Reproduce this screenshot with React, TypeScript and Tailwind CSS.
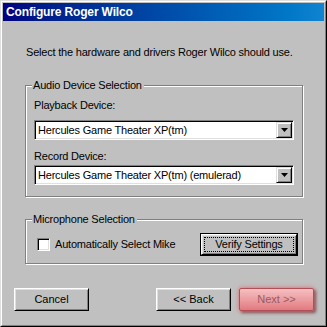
import React from "react";

const font = { fontFamily: '"Liberation Sans", Arial, sans-serif' };

function Combo({ text }: { text: string }) {
  return (
    <div className="flex h-[20px] w-[260px] border border-t-[#808080] border-l-[#808080] border-b-white border-r-white bg-white">
      <div className="flex flex-1 items-stretch shadow-[inset_1px_1px_#000,inset_-1px_-1px_#dfdfdf] p-[1px]">
        <div className="flex flex-1 items-center pl-[2px] text-[11px] leading-[13px] tracking-[-0.2px] text-black">{text}</div>
        <div className="flex w-[16px] items-center justify-center bg-[#c0c0c0] border border-t-[#dfdfdf] border-l-[#dfdfdf] border-b-black border-r-black shadow-[inset_1px_1px_#fff,inset_-1px_-1px_#808080]">
          <svg width="7" height="4" viewBox="0 0 7 4">
            <path d="M0 0h7L3.5 4z" fill="#000" />
          </svg>
        </div>
      </div>
    </div>
  );
}

function Btn({ label, className = "" }: { label: string; className?: string }) {
  return (
    <div
      className={`flex h-[23px] w-[75px] items-center justify-center border border-t-white border-l-white border-b-black border-r-black bg-[#c0c0c0] shadow-[inset_1px_1px_#dfdfdf,inset_-1px_-1px_#808080] text-[11px] leading-[13px] text-black ${className}`}
    >
      {label}
    </div>
  );
}

export default function App() {
  return (
    <div style={font} className="h-[327px] w-[327px] bg-[#c0c0c0] border border-t-[#dfdfdf] border-l-[#dfdfdf] border-b-black border-r-black">
      <div className="flex h-full w-full flex-col border border-t-white border-l-white border-b-[#808080] border-r-[#808080] p-[1px]">
        <div className="flex h-[18px] items-center bg-gradient-to-r from-[#000080] to-[#1084d0] pl-[3px] text-[12px] font-bold leading-[14px] tracking-[-0.15px] text-white">
          Configure Roger Wilco
        </div>

        <div className="ml-[23px] mt-[25px] text-[11px] leading-[13px] tracking-[-0.2px] text-black">
          Select the hardware and drivers Roger Wilco should use.
        </div>

        {/* Audio group */}
        <div className="ml-[22px] mt-[26px] flex w-[278px] flex-col border border-[#808080] shadow-[1px_1px_#fff,inset_1px_1px_#fff] pb-[11px] pl-[8px]">
          <div className="-mt-[7px] -ml-[2px] w-fit bg-[#c0c0c0] pl-[1px] pr-[2px] text-[11px] leading-[13px] tracking-[-0.2px] text-black">
            Audio Device Selection
          </div>
          <div className="mt-[7px] text-[11px] leading-[13px] tracking-[-0.2px] text-black">Playback Device:</div>
          <div className="mt-[8px]">
            <Combo text="Hercules Game Theater XP(tm)" />
          </div>
          <div className="mt-[10px] text-[11px] leading-[13px] tracking-[-0.2px] text-black">Record Device:</div>
          <div className="mt-[2px]">
            <Combo text="Hercules Game Theater XP(tm) (emulerad)" />
          </div>
        </div>

        {/* Microphone group */}
        <div className="ml-[22px] mt-[22px] flex w-[278px] flex-col border border-[#808080] shadow-[1px_1px_#fff,inset_1px_1px_#fff] pb-[7px] pl-[11px] pr-[4px]">
          <div className="-mt-[7px] -ml-[5px] w-fit bg-[#c0c0c0] pl-[1px] pr-[2px] text-[11px] leading-[13px] tracking-[-0.2px] text-black">
            Microphone Selection
          </div>
          <div className="mt-[7px] flex items-center justify-between">
            <div className="flex items-center">
              <div className="h-[13px] w-[13px] border border-t-[#808080] border-l-[#808080] border-b-white border-r-white bg-white shadow-[inset_1px_1px_#000,inset_-1px_-1px_#dfdfdf]" />
              <div className="ml-[5px] text-[11px] leading-[13px] tracking-[-0.2px] text-black">Automatically Select Mike</div>
            </div>
            <div className="border border-black">
              <div className="flex h-[21px] w-[96px] items-center justify-center border border-t-white border-l-white border-b-black border-r-black bg-[#c0c0c0] shadow-[inset_1px_1px_#dfdfdf,inset_-1px_-1px_#808080] p-[2px]">
                <div className="flex h-full w-full items-center justify-center border border-dotted border-black text-[11px] leading-[13px] tracking-[-0.2px] text-black">
                  Verify Settings
                </div>
              </div>
            </div>
          </div>
        </div>

        {/* Bottom buttons */}
        <div className="ml-[11px] mt-[24px] flex items-center">
          <Btn label="Cancel" />
          <Btn label="<< Back" className="ml-[67px]" />
          <div className="ml-[8px] flex h-[23px] w-[75px] items-center justify-center rounded-[2px] border border-[#b04f55] bg-gradient-to-b from-[#f4c0c2] to-[#e27a80] text-[11px] leading-[13px] text-[#9a5a62] shadow-[0_0_5px_#e06a72,2px_2px_3px_rgba(40,20,20,0.6)]">
            Next &gt;&gt;
          </div>
        </div>
      </div>
    </div>
  );
}
